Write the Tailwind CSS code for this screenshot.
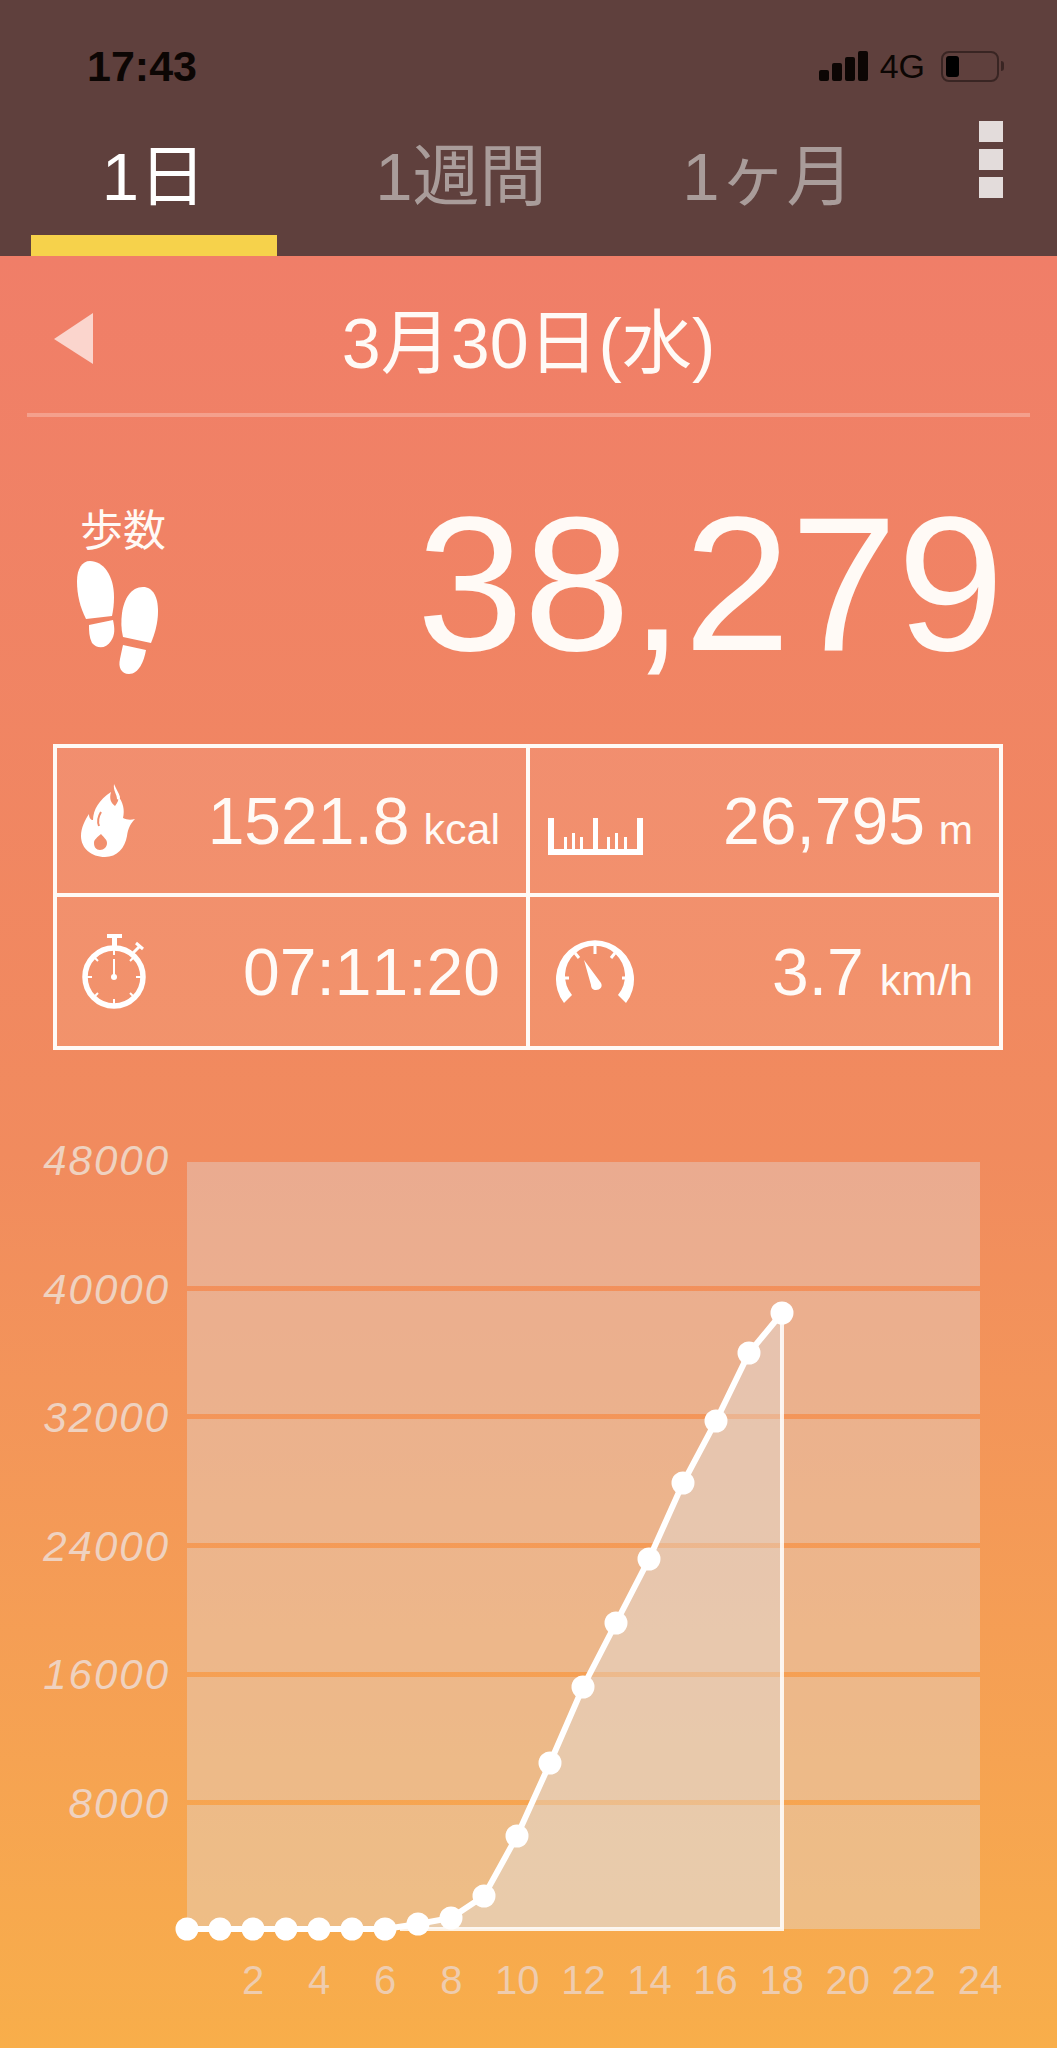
<!DOCTYPE html>
<html lang="ja">
<head>
    <meta charset="UTF-8">
    <meta name="viewport" content="width=device-width, initial-scale=1.0">
    <title>歩数</title>
    <script src="https://cdn.jsdelivr.net/npm/@tailwindcss/browser@4"></script>
</head>
<body class="w-[1057px] h-[2048px] overflow-hidden font-['Liberation_Sans','Noto_Sans_CJK_JP',sans-serif]">
    <!-- header -->
    <header class="h-[256px] bg-[#5f403d] pt-[44px]">
        <div class="h-[44px] flex items-center pl-[87px] pr-[53px] text-[#0c0604]">
            <span class="text-[43px] leading-none font-bold">17:43</span>
            <div class="ml-auto flex items-center">
                <div class="flex items-end gap-[3px] h-[30px]">
                    <div class="w-[10px] h-[11px] rounded-[2px] bg-[#0c0604]"></div>
                    <div class="w-[10px] h-[18px] rounded-[2px] bg-[#0c0604]"></div>
                    <div class="w-[10px] h-[24px] rounded-[2px] bg-[#0c0604]"></div>
                    <div class="w-[10px] h-[30px] rounded-[2px] bg-[#0c0604]"></div>
                </div>
                <span class="ml-[12px] text-[34px] leading-none">4G</span>
                <div class="ml-[16px] w-[58px] h-[31px] rounded-[8px] border-2 border-[#2a1a18]/70 p-[3px]">
                    <div class="w-[13px] h-full rounded-[3px] bg-black"></div>
                </div>
                <div class="ml-[2px] w-[3px] h-[10px] rounded-r-full bg-[#2a1a18]/70"></div>
            </div>
        </div>
        <div class="flex pl-[31px]">
            <div class="flex gap-[61px]">
                <div class="w-[246px] h-[168px] pt-[30px] border-b-[21px] border-[#f6d24b] text-center text-[67px] leading-[118px] text-white">1日</div>
                <div class="w-[246px] h-[168px] pt-[30px] border-b-[21px] border-transparent text-center text-[67px] leading-[118px] text-[#a99c9a] whitespace-nowrap">1週間</div>
                <div class="w-[246px] h-[168px] pt-[30px] border-b-[21px] border-transparent text-center text-[67px] leading-[118px] text-[#a99c9a] whitespace-nowrap">1ヶ月</div>
            </div>
            <div class="ml-[88px] mt-[33px] flex flex-col gap-[7px]">
                <div class="w-[24px] h-[21px] bg-[#e3dcdb]"></div>
                <div class="w-[24px] h-[21px] bg-[#e3dcdb]"></div>
                <div class="w-[24px] h-[21px] bg-[#e3dcdb]"></div>
            </div>
        </div>
    </header>

    <main class="h-[1792px] bg-linear-to-b from-[#f07e68] via-[#f18b5e] to-[#f8ae4a] text-[#fffaf6]">
        <!-- date -->
        <div class="h-[157px] pt-[18px] grid grid-cols-[1fr_auto_1fr] items-center">
            <svg class="ml-[54px] mb-[10px]" width="39" height="51" viewBox="0 0 39 51"><path d="M39 0V51L0 26Z" fill="#fbd5cd"/></svg>
            <div class="text-[70px] leading-none whitespace-nowrap">3月30日(水)</div>
            <div></div>
        </div>
        <div class="mx-[27px] h-[4px] bg-white/25"></div>

        <!-- steps -->
        <div class="h-[327px] flex justify-between pl-[77px] pr-[53px]">
            <div class="pt-[93px]">
                <div class="pl-[3px] text-[43px] leading-none">歩数</div>
                <svg class="mt-[8px]" width="81" height="114" viewBox="0 0 81 114" fill="#fff">
                    <path d="M13 0C26 0 37 14 37 36C37 44 36 50 35 55L9 58C3 46 0 34 0 20C0 8 5 0 13 0Z"/>
                    <path d="M12 64L36 59C38 68 38 74 34 80C29 88 20 88 15 82C12 76 12 70 12 64Z"/>
                    <path d="M66 26C76 26 81 36 81 50C81 62 78 72 74 82L46 76C44 68 44 60 45 52C47 38 54 26 66 26Z"/>
                    <path d="M46 84L69 89C67 100 62 113 52 113C44 113 41 106 43 98C44 93 45 88 46 84Z"/>
                </svg>
            </div>
            <div class="mt-[71px] text-[192px] leading-none">38,279</div>
        </div>

        <!-- stats table -->
        <div class="ml-[53px] w-[950px] h-[306px] border-4 border-[#fffaf6] bg-white/[0.08] grid grid-cols-[473px_1fr] grid-rows-2">
            <div class="flex items-center justify-between pl-[24px] pr-[26px] border-r-4 border-b-4 border-[#fffaf6]">
                <svg width="54" height="73" viewBox="0 0 54 73" fill="#fff">
                    <path fill-rule="evenodd" d="M24 73C10 73 0 64 0 52C0 44 4 36 8 30C8 34 10 36 12 36C12 26 18 16 30 8C28 15 30 19 34 22C37 18 38 16 37 12C42 18 44 26 42 34C46 36 50 36 54 35C50 39 47 44 46 52C44 64 36 73 24 73ZM19 66C23 66 26 63 26 59C26 55 22 53 20 50C17 53 13 55 13 59C13 63 15 66 19 66Z"/>
                    <path d="M33 0C35 5 38 9 39 13C39 15 37 16 36 15C36 10 32 7 33 0Z"/>
                    <path d="M20 28C17 33 16 37 18 42" fill="none" stroke="#f08e6e" stroke-width="2"/>
                </svg>
                <div class="whitespace-nowrap"><span class="text-[66px] leading-none">1521.8</span><span class="ml-[14px] text-[43px] leading-none">kcal</span></div>
            </div>
            <div class="flex items-center justify-between pl-[18px] pr-[26px] border-b-4 border-[#fffaf6]">
                <svg class="mt-[32px]" width="95" height="37" viewBox="0 0 95 37" fill="#fff">
                    <path d="M0 0H6V31H45V0H50V31H89V0H95V37H0Z"/>
                    <path d="M16 19h3v12h-3zM24 15h3v16h-3zM32 19h3v12h-3zM59 19h3v12h-3zM67 15h3v16h-3zM76 19h3v12h-3z"/>
                </svg>
                <div class="whitespace-nowrap"><span class="text-[66px] leading-none">26,795</span><span class="ml-[14px] text-[41px] leading-none">m</span></div>
            </div>
            <div class="flex items-center justify-between pl-[25px] pr-[26px] border-r-4 border-[#fffaf6]">
                <svg width="64" height="75" viewBox="0 0 64 75" fill="none" stroke="#fff">
                    <circle cx="32" cy="43" r="29" stroke-width="5.500"/>
                    <path d="M25 2H40" stroke-width="4"/>
                    <path d="M32.500 3V12" stroke-width="5"/>
                    <path d="M51 19L58 12M54 9L61 15" stroke-width="3"/>
                    <path d="M32 43V25" stroke-width="2"/>
                    <path d="M32 16V21M32 65V70M5 43H10M54 43H59M13 24L16 27M48 59L51 62M13 62L16 59M48 27L51 24" stroke-width="2"/>
                    <circle cx="32" cy="43" r="3" fill="#fff" stroke="none"/>
                </svg>
                <div class="text-[66px] leading-none whitespace-nowrap [font-kerning:none]">07:11:20</div>
            </div>
            <div class="flex items-center justify-between pl-[26px] pr-[26px]">
                <svg width="79" height="64" viewBox="0 0 79 64" fill="#fff">
                    <path d="M8 63A39 39 0 1 1 70 63L62 55A30 30 0 1 0 16 55Z"/>
                    <path d="M39 5V14M19 13L23 18M59 13L55 18M6 38H13M73 38H66" stroke="#fff" stroke-width="3" fill="none"/>
                    <path d="M28 20L45 43C47 47 44 50 40 50C37 50 35 48 35 45Z"/>
                </svg>
                <div class="whitespace-nowrap"><span class="text-[66px] leading-none">3.7</span><span class="ml-[16px] text-[43px] leading-none">km/h</span></div>
            </div>
        </div>

        <!-- chart -->
        <div class="mt-[112px] flex">
            <div class="w-[170px] -mt-[24px] flex flex-col gap-[82.600px] text-right text-[42px] leading-[46px] tracking-[2px] italic text-[#efd2c0]">
                <div>48000</div>
                <div>40000</div>
                <div>32000</div>
                <div>24000</div>
                <div>16000</div>
                <div>8000</div>
            </div>
            <div class="relative ml-[17px] w-[793px] h-[767px] flex flex-col gap-[5px]">
                <div class="flex-1 bg-[#dfe0e3]/[0.38]"></div>
                <div class="flex-1 bg-[#dfe0e3]/[0.38]"></div>
                <div class="flex-1 bg-[#dfe0e3]/[0.38]"></div>
                <div class="flex-1 bg-[#dfe0e3]/[0.38]"></div>
                <div class="flex-1 bg-[#dfe0e3]/[0.38]"></div>
                <div class="flex-1 bg-[#dfe0e3]/[0.38]"></div>
                <svg class="absolute inset-0 overflow-visible" width="793" height="767" viewBox="187 1162 793 767">
                    <path d="M385 1929L418 1924L451 1918L484 1896L517 1836L550 1763L583 1687L616 1623L649 1559L683 1483L716 1421L749 1353L782 1313V1929Z" fill="#e0e0e0" fill-opacity="0.4"/>
                    <path d="M782 1313V1929H400" fill="none" stroke="#fff" stroke-opacity="0.85" stroke-width="4"/>
                    <polyline points="187,1929 385,1929 418,1924 451,1918 484,1896 517,1836 550,1763 583,1687 616,1623 649,1559 683,1483 716,1421 749,1353 782,1313" fill="none" stroke="#fff" stroke-width="6"/>
                    <g fill="#fff">
                        <circle cx="187" cy="1929" r="11.500"/><circle cx="220" cy="1929" r="11.500"/><circle cx="253" cy="1929" r="11.500"/><circle cx="286" cy="1929" r="11.500"/><circle cx="319" cy="1929" r="11.500"/><circle cx="352" cy="1929" r="11.500"/><circle cx="385" cy="1929" r="11.500"/>
                        <circle cx="418" cy="1924" r="11.500"/><circle cx="451" cy="1918" r="11.500"/><circle cx="484" cy="1896" r="11.500"/><circle cx="517" cy="1836" r="11.500"/><circle cx="550" cy="1763" r="11.500"/><circle cx="583" cy="1687" r="11.500"/>
                        <circle cx="616" cy="1623" r="11.500"/><circle cx="649" cy="1559" r="11.500"/><circle cx="683" cy="1483" r="11.500"/><circle cx="716" cy="1421" r="11.500"/><circle cx="749" cy="1353" r="11.500"/><circle cx="782" cy="1313" r="11.500"/>
                    </g>
                </svg>
            </div>
        </div>
        <div class="mt-[28px] ml-[220px] w-[793px] grid grid-cols-12 text-center text-[40px] leading-[46px] text-[#eeccaf]">
            <div>2</div><div>4</div><div>6</div><div>8</div><div>10</div><div>12</div><div>14</div><div>16</div><div>18</div><div>20</div><div>22</div><div>24</div>
        </div>
    </main>
</body>
</html>
